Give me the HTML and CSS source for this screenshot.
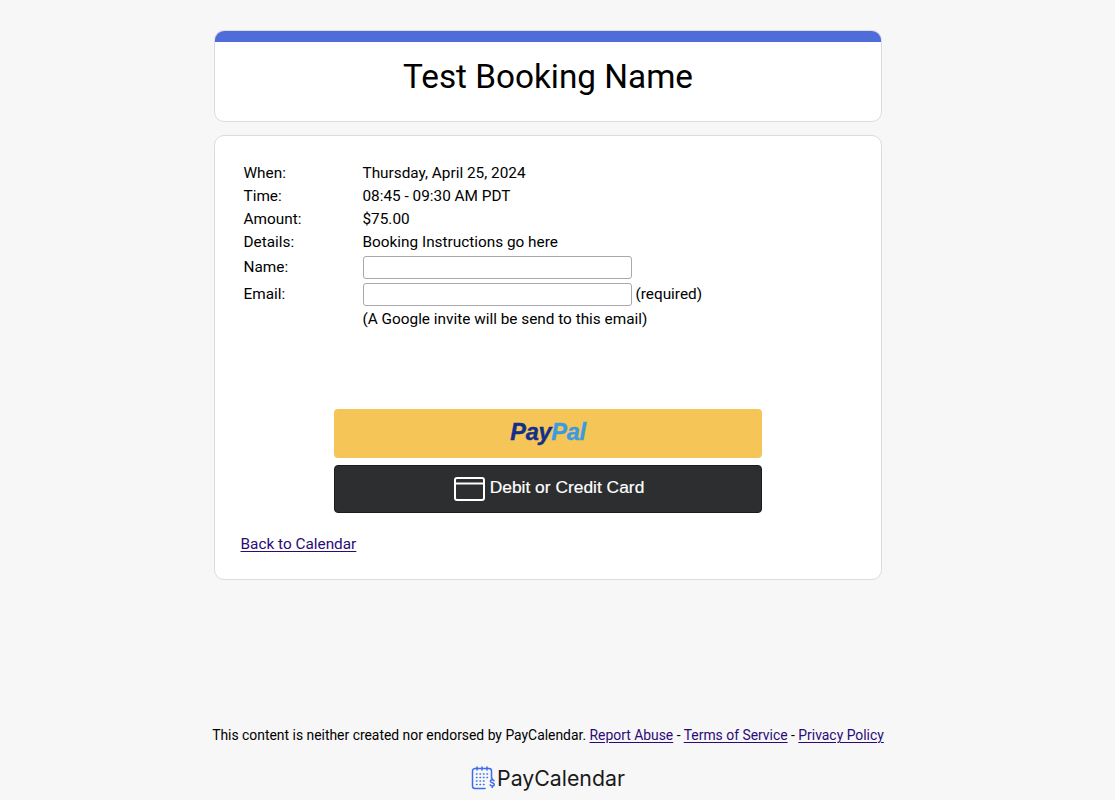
FILE: index.html
```html
<!DOCTYPE html>
<html lang="en">
<head>
  <meta charset="UTF-8">
  <meta name="viewport" content="width=device-width, initial-scale=1.0">
  <title>Test Booking Name</title>
  <link rel="stylesheet" href="styles.css">
</head>
<body>
  <div class="page">
    <div class="card title-card">
      <div class="title-bar"></div>
      <h1>Test Booking Name</h1>
    </div>

    <div class="card booking-card">
      <form class="details">
        <div class="row"><span class="label">When:</span><span>Thursday, April 25, 2024</span></div>
        <div class="row"><span class="label">Time:</span><span>08:45 - 09:30 AM PDT</span></div>
        <div class="row"><span class="label">Amount:</span><span>$75.00</span></div>
        <div class="row"><span class="label">Details:</span><span>Booking Instructions go here</span></div>
        <div class="row row-input"><label class="label" for="name">Name:</label><input type="text" id="name"></div>
        <div class="row row-input"><label class="label" for="email">Email:</label><input type="text" id="email"><span class="required">(required)</span></div>
        <div class="row row-note"><span class="label"></span><span>(A Google invite will be send to this email)</span></div>
      </form>

      <div class="pay-buttons">
        <button type="button" class="pay-btn paypal"><span class="pp-dark">Pay</span><span class="pp-light">Pal</span></button>
        <button type="button" class="pay-btn card-btn">
          <svg class="card-icon" width="31" height="24" viewBox="0 0 31 24" fill="none" stroke="#fff" stroke-width="2">
            <rect x="1" y="1" width="29" height="22" rx="2"/>
            <path d="M1 6.5h29"/>
          </svg>
          <span class="card-text">Debit or Credit Card</span>
        </button>
      </div>

      <a class="back-link" href="#">Back to Calendar</a>
    </div>
  </div>

  <footer class="footer">
    <p class="legal">This content is neither created nor endorsed by PayCalendar. <a href="#">Report Abuse</a> - <a href="#">Terms of Service</a> - <a href="#">Privacy Policy</a></p>
    <div class="brand">
      <svg width="25" height="24" viewBox="0 0 25 24" fill="none" stroke="#3b6cec" stroke-width="1.5" stroke-linecap="round">
        <path d="M14 22.500H4a2.500 2.500 0 0 1-2.500-2.500V5A2.500 2.500 0 0 1 4 2.500h14A2.500 2.500 0 0 1 20.500 5v7"/>
        <path d="M6 1v3M11 1v3M16 1v3"/>
        <path d="M5.500 8h.5M9 8h.5M12.500 8h.5M16 8h.5M5.500 11.500h.5M9 11.500h.5M12.500 11.500h.5M16 11.500h.5M5.500 15h.5M9 15h.5M12.500 15h.5M5.500 18.500h.5M9 18.500h.5M12.500 18.500h.5"/>
        <path d="M23 14.800c-.4-.7-1-1-1.800-1-1 0-1.800.5-1.800 1.500 0 2 3.800 1 3.800 3.100 0 1-.9 1.600-2 1.600-.9 0-1.600-.4-2-1.100M21.200 12.500v1.300M21.200 20v1.500"/>
      </svg>
      <span>PayCalendar</span>
    </div>
  </footer>
</body>
</html>
```

FILE: styles.css
```css
html, body {
  margin: 0;
  height: 800px;
  overflow: hidden;
}
body {
  padding-right: 19px;
  background: #f7f7f7;
  color: #000;
  font-family: Roboto, Arial, sans-serif;
  font-size: 15.35px;
}
a {
  color: #2a0a7a;
  text-decoration-thickness: 1px;
  text-underline-offset: 2px;
}
.page {
  width: 668px;
  margin: 0 auto;
  padding-top: 30px;
}
.card {
  background: #fff;
  border: 1px solid #dcdcdc;
  border-radius: 10px;
  box-sizing: border-box;
}
.title-card {
  height: 92px;
  overflow: hidden;
}
.title-bar {
  height: 11px;
  background: #4e6ddb;
}
h1 {
  margin: 16px 0 0;
  font-size: 33.3px;
  font-weight: 400;
  line-height: 38px;
  text-align: center;
}
.booking-card {
  height: 445px;
  margin-top: 13px;
  padding: 25px 25px 0;
}
.details {
  height: 248px;
}
.row {
  display: flex;
  align-items: center;
  height: 23px;
  padding-left: 3.5px;
}
.label {
  width: 119px;
  flex-shrink: 0;
}
.row-input {
  height: 27px;
}
.row-note {
  height: 24px;
}
input {
  width: 269px;
  height: 23px;
  box-sizing: border-box;
  margin-top: 2px;
  padding: 1px 2px;
  border: 1px solid #a9a9ad;
  border-radius: 3px;
  background: #fff;
}
.required {
  margin-left: 4px;
}
.pay-buttons {
  display: flex;
  flex-direction: column;
  align-items: center;
  gap: 7px;
}
.pay-btn {
  display: flex;
  align-items: center;
  justify-content: center;
  width: 428px;
  height: 49px;
  box-sizing: border-box;
  border: none;
  border-radius: 4px;
  padding: 0;
}
.paypal {
  background: #f6c557;
  padding-bottom: 3px;
  font-family: "Liberation Sans", Arial, sans-serif;
  font-size: 23.5px;
  font-weight: 700;
  font-style: italic;
  letter-spacing: -0.3px;
  -webkit-text-stroke: 0.4px;
}
.pp-dark {
  color: #12308a;
}
.pp-light {
  color: #3a9ce0;
}
.card-btn {
  height: 48px;
  gap: 5px;
  background: #2c2e2f;
  border: 1px solid #1b1c1d;
  color: #fff;
  font-family: "Liberation Sans", Arial, sans-serif;
  font-size: 17.4px;
  padding: 0 0 4px 2px;
  -webkit-text-stroke: 0.2px;
}
.card-icon {
  margin-top: 4px;
}
.back-link {
  display: block;
  width: max-content;
  margin-top: 22px;
  margin-left: 0.5px;
}
.footer {
  position: absolute;
  left: 0;
  right: 19px;
  top: 726px;
  text-align: center;
}
.legal {
  margin: 0;
  font-size: 13.9px;
  line-height: 18px;
}
.brand {
  display: flex;
  align-items: center;
  justify-content: center;
  gap: 1px;
  margin-top: 21px;
  font-family: Inter, sans-serif;
  font-size: 21.3px;
  color: #1a1a1a;
}
```
